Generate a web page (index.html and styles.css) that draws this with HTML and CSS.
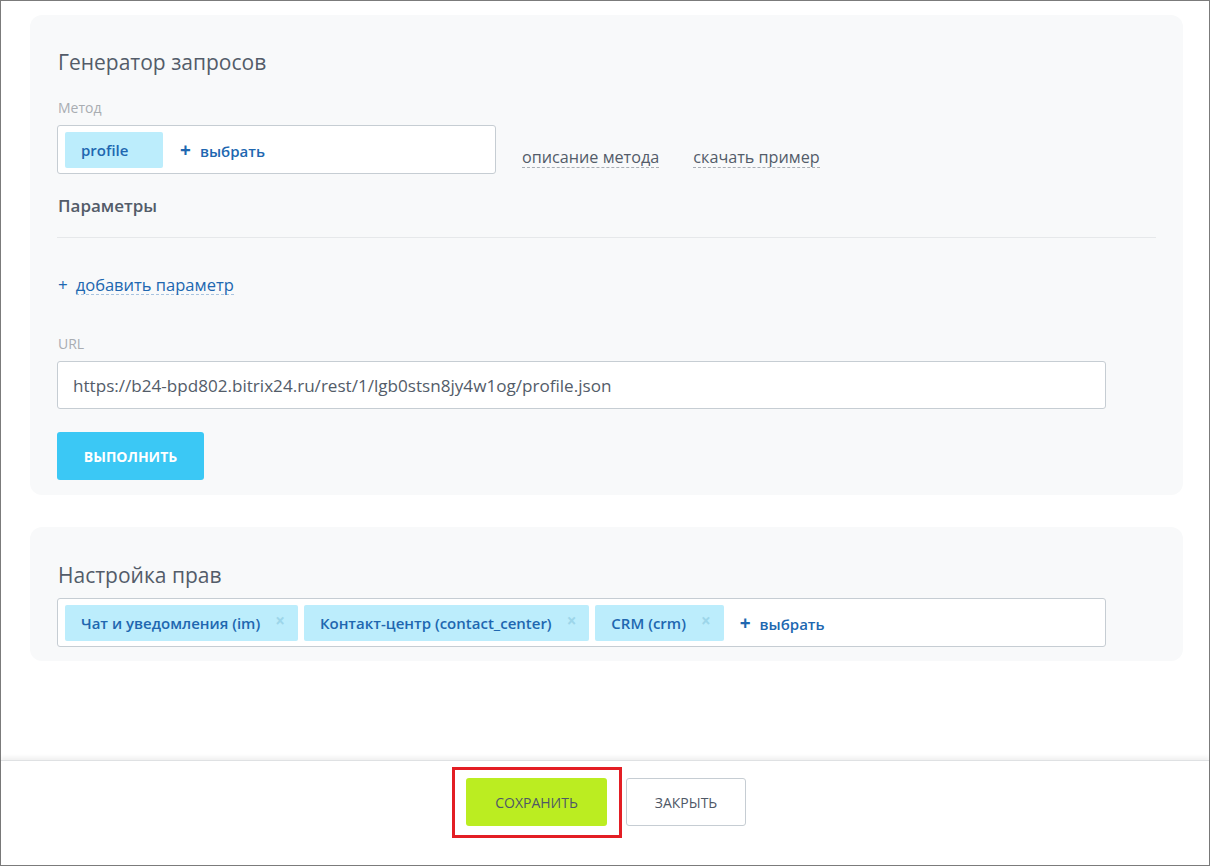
FILE: index.html
```html
<!DOCTYPE html>
<html lang="ru">
<head>
<meta charset="utf-8">
<link rel="stylesheet" href="styles.css">
</head>
<body>
<div class="frame">
  <div class="content">
    <section class="card card-gen">
      <h2 class="card-title">Генератор запросов</h2>
      <div class="label">Метод</div>
      <div class="method-row">
        <div class="field field-method">
          <span class="tag tag-solo">profile</span>
          <span class="add-select"><span class="plus">+</span>выбрать</span>
        </div>
        <a class="dash-link">описание метода</a>
        <a class="dash-link">скачать пример</a>
      </div>
      <div class="params-title">Параметры</div>
      <div class="sep"></div>
      <div class="add-param"><span class="add-plus">+</span><a class="blue-link">добавить параметр</a></div>
      <div class="label label-url">URL</div>
      <div class="field field-url">https://b24-bpd802.bitrix24.ru/rest/1/lgb0stsn8jy4w1og/profile.json</div>
      <button class="btn btn-run">ВЫПОЛНИТЬ</button>
    </section>
    <section class="card card-rights">
      <h2 class="card-title">Настройка прав</h2>
      <div class="field field-rights">
        <span class="tag">Чат и уведомления (im)<span class="x">×</span></span>
        <span class="tag">Контакт-центр (contact_center)<span class="x">×</span></span>
        <span class="tag">CRM (crm)<span class="x">×</span></span>
        <span class="add-select"><span class="plus">+</span>выбрать</span>
      </div>
    </section>
  </div>
  <footer class="footer">
    <div class="highlight"><button class="btn btn-save">СОХРАНИТЬ</button></div>
    <button class="btn btn-close">ЗАКРЫТЬ</button>
  </footer>
</div>
</body>
</html>
```
FILE: styles.css
```css
* { box-sizing: border-box; }
html, body { margin: 0; padding: 0; background: #fff; }
body { font-family: "Open Sans", "Noto Sans", sans-serif; color: #535c69; }
.frame {
  width: 1210px; height: 866px;
  border: 1px solid #7b7b7b;
  display: flex; flex-direction: column;
}
.content { flex: 1; padding: 14px 26px 0 29px; }
.card { background: #f8f9fa; border-radius: 12px; padding: 0 27px; }
.card-gen { height: 480px; padding-top: 33px; }
.card-rights { margin-top: 32px; height: 134px; padding-top: 34px; }
.card-title { margin: 0 0 0 1px; font-size: 21px; font-weight: 400; line-height: 28px; color: #535c69; }
.label { font-size: 14px; color: #a9adb2; line-height: 18px; margin-top: 23px; margin-left: 1px; }
.method-row { display: flex; align-items: flex-end; margin-top: 8px; }
.field {
  background: #fff; border: 1px solid #c6cdd3; border-radius: 3px;
  display: flex; align-items: center;
}
.field-method { width: 439px; height: 49px; padding: 0 7px; }
.tag {
  background: #bcedfc; color: #2067b0; font-weight: 600; font-size: 15px;
  border-radius: 2px; height: 36px; display: inline-flex; align-items: center;
  padding: 0 13px 0 16px; margin-right: 6px; white-space: nowrap;
}
.tag-solo { width: 98px; padding-left: 16px; margin-right: 0; }
.x { color: #9dd6ea; font-size: 17px; font-weight: 700; margin-left: 15px; position: relative; top: -2px; }
.add-select { color: #2067b0; font-weight: 600; font-size: 15px; margin-left: 10px; white-space: nowrap; }
.tag-solo + .add-select { margin-left: 17px; }
.plus { font-size: 19px; font-weight: 700; margin-right: 9px; }
.dash-link {
  font-size: 16.2px; color: #535c69; border-bottom: 1px dashed #a8adb4;
  line-height: 19px; margin-left: 26px; margin-bottom: 6px;
}
.dash-link + .dash-link { margin-left: 34px; }
.params-title { font-size: 17px; font-weight: 600; color: #535c69; margin-top: 21px; line-height: 22px; margin-left: 1px; }
.sep { height: 1px; background: #e6e8ea; margin-top: 20px; }
.add-param { margin-top: 37px; font-size: 16.5px; line-height: 20px; display: flex; align-items: baseline; margin-left: 1px; }
.add-plus { color: #2067b0; font-size: 17px; margin-right: 8px; }
.blue-link { color: #2067b0; border-bottom: 1px dashed #a8c3e0; line-height: 19px; }
.label-url { margin-top: 40px; }
.field-url { width: 1049px; height: 48px; margin-top: 8px; padding: 0 15px; font-size: 17.1px; color: #535c69; }
.btn {
  font-family: "Open Sans", "Noto Sans", sans-serif;
  height: 48px; border-radius: 3px; border: none; font-size: 14px; font-weight: 700;
  cursor: pointer; padding: 0;
}
.btn-run { margin-top: 23px; width: 147px; background: #3bc8f5; color: #fff; }
.field-rights { width: 1049px; height: 49px; margin-top: 9px; padding: 0 7px; }
.footer {
  height: 105px; border-top: 1px solid #dfe1e3;
  box-shadow: 0 -3px 4px rgba(0,0,0,0.06);
  display: flex; justify-content: center; align-items: flex-start; padding-top: 6px; padding-right: 12px;
}
.highlight { border: 3px solid #e31e24; padding: 8px 12px 9px 11px; }
.btn-save { width: 141px; background: #bbed21; color: #4f5866; font-weight: 400; font-size: 14px; display: block; }
.btn-close {
  margin-top: 11px; margin-left: 4px; width: 120px; background: #fff; border: 1px solid #c6cdd3;
  color: #4f5866; font-weight: 400; font-size: 14px;
}
```
